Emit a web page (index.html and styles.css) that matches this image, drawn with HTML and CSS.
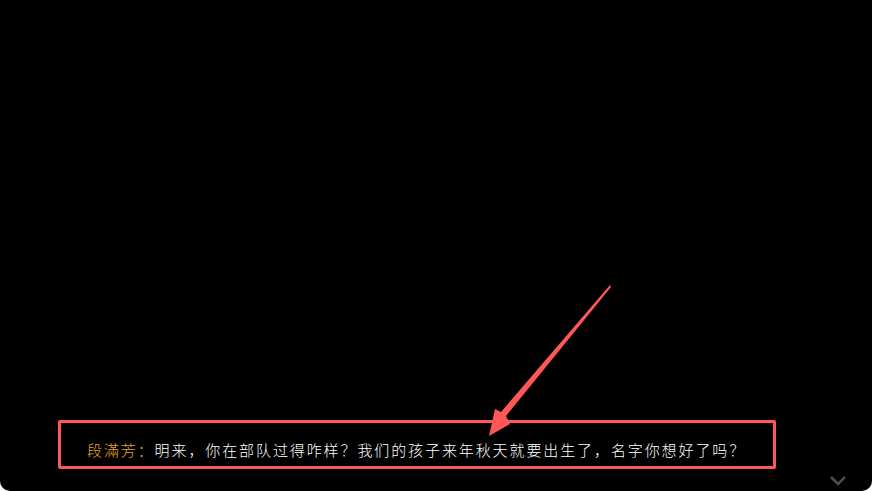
FILE: index.html
```html
<!DOCTYPE html>
<html lang="zh">
<head>
<meta charset="utf-8">
<title>对话</title>
<link rel="stylesheet" href="styles.css">
</head>
<body>
<div class="stage">
  <div class="dialog">
    <span class="speaker">段滿芳：</span><span class="line">明来，你在部队过得咋样？我们的孩子来年秋天就要出生了，名字你想好了吗？</span>
  </div>
  <svg class="arrow" width="872" height="491" viewBox="0 0 872 491">
    <polygon points="610,285 611,287 506,416 510,424 489,436 495,409 501,412" fill="#ff5757"/>
  </svg>
  <svg class="more" width="18" height="12" viewBox="0 0 18 12">
    <polyline points="2,2 9,9 16,2" fill="none" stroke="#4d4d4d" stroke-width="2.5"/>
  </svg>
</div>
</body>
</html>
```

FILE: styles.css
```css
html, body {
  margin: 0;
  padding: 0;
  background: #ffffff;
}
.stage {
  position: relative;
  width: 872px;
  height: 491px;
  background: #000000;
  border-radius: 0 0 10px 10px;
  overflow: hidden;
  display: flex;
  flex-direction: column;
  justify-content: flex-end;
  padding-bottom: 22px;
  box-sizing: border-box;
}
.dialog {
  margin-left: 58px;
  width: 718px;
  height: 49px;
  box-sizing: border-box;
  border: 3px solid #ff5757;
  border-radius: 2px;
  padding: 17px 0 0 26px;
  font-family: "Noto Sans CJK SC", "Noto Sans", sans-serif;
  font-size: 15px;
  font-weight: 300;
  line-height: 20px;
  letter-spacing: 1.9px;
  white-space: nowrap;
}
.speaker {
  color: #e8a81e;
}
.line {
  color: #ffffff;
}
.arrow {
  position: absolute;
  left: 0;
  top: 0;
  pointer-events: none;
}
.more {
  position: absolute;
  left: 829px;
  top: 475px;
}
```
